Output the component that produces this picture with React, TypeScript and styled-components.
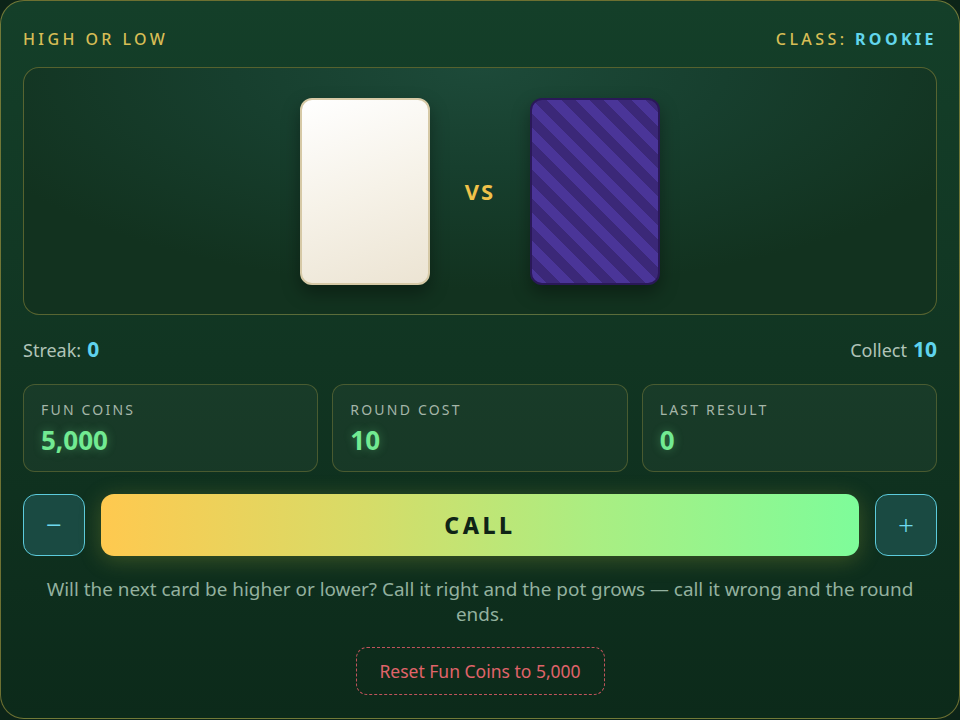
import styled, { createGlobalStyle } from "styled-components";

const GlobalStyle = createGlobalStyle`
  html, body {
    margin: 0;
    padding: 0;
    background: #0c2418;
  }
  body {
    font-family: "Noto Sans", "Open Sans", sans-serif;
  }
`;

const Panel = styled.div`
  box-sizing: border-box;
  width: 960px;
  height: 719px;
  padding: 28px 22px 0;
  border: 1px solid rgba(190, 170, 70, 0.55);
  border-radius: 24px;
  background: linear-gradient(180deg, #143f29 0%, #113522 50%, #0c2a1a 100%);
  display: flex;
  flex-direction: column;
  color: #d8e6dc;
`;

const Header = styled.div`
  display: flex;
  justify-content: space-between;
  align-items: center;
  height: 20px;
  font-size: 16px;
  font-weight: 500;
  letter-spacing: 3.4px;
  text-transform: uppercase;
  color: #d7bd55;
`;

const ClassName = styled.span`
  color: #62d6ec;
  font-weight: 700;
`;

const Table = styled.div`
  margin-top: 18px;
  height: 248px;
  box-sizing: border-box;
  border: 1px solid rgba(190, 170, 70, 0.4);
  border-radius: 16px;
  background: radial-gradient(ellipse 60% 90% at 50% 0%, #1d4a39 0%, #173f2e 45%, #12321f 100%);
  display: flex;
  align-items: center;
  justify-content: center;
  gap: 35px;
`;

const Card = styled.div<{ $back?: boolean }>`
  width: 130px;
  height: 187px;
  box-sizing: border-box;
  border-radius: 12px;
  box-shadow: 0 8px 18px rgba(0, 0, 0, 0.35);
  border: 2px solid ${(p) => (p.$back ? "#2a1858" : "#d6c9a6")};
  background: ${(p) =>
    p.$back
      ? "repeating-linear-gradient(45deg, #4a3598 0px, #4a3598 10px, #3b2878 10px, #3b2878 20px)"
      : "linear-gradient(160deg, #ffffff 0%, #f6f2e8 50%, #ece4d3 100%)"};
`;

const Versus = styled.span`
  font-size: 22px;
  font-weight: 700;
  letter-spacing: 2px;
  color: #f0c24a;
`;

const InfoRow = styled.div`
  margin-top: 20px;
  display: flex;
  justify-content: space-between;
  align-items: baseline;
  font-size: 18px;
  color: #b0c4b8;
`;

const Accent = styled.span`
  font-size: 21px;
  font-weight: 700;
  color: #5fd3ee;
  margin-left: 6px;
`;

const Stats = styled.div`
  margin-top: 21px;
  display: grid;
  grid-template-columns: repeat(3, 1fr);
  gap: 14px;
`;

const StatBox = styled.div`
  height: 88px;
  box-sizing: border-box;
  padding: 15px 17px;
  border: 1px solid rgba(190, 170, 70, 0.3);
  border-radius: 12px;
  background: rgba(255, 255, 255, 0.035);
  display: flex;
  flex-direction: column;
  gap: 3px;
`;

const StatLabel = styled.span`
  font-size: 14px;
  letter-spacing: 2.2px;
  text-transform: uppercase;
  color: #a5b6a8;
`;

const StatValue = styled.span`
  font-size: 26px;
  font-weight: 700;
  color: #72ea92;
  text-shadow: 0 0 10px rgba(114, 234, 146, 0.35);
`;

const Controls = styled.div`
  margin-top: 22px;
  display: flex;
  gap: 16px;
  height: 62px;
`;

const StepButton = styled.button`
  width: 62px;
  height: 62px;
  box-sizing: border-box;
  border: 1.5px solid #5ccbdc;
  border-radius: 13px;
  background: #1a4a42;
  color: #6fd9ee;
  font-family: inherit;
  font-size: 28px;
  font-weight: 300;
  line-height: 1;
  display: flex;
  align-items: center;
  justify-content: center;
  padding: 0 0 3px;
`;

const CallButton = styled.button`
  flex: 1;
  border: none;
  border-radius: 13px;
  background: linear-gradient(90deg, #ffc94f 0%, #d6dc68 35%, #aaee82 65%, #7efc9a 100%);
  box-shadow: 0 4px 22px rgba(200, 200, 60, 0.25);
  font-family: inherit;
  font-size: 23px;
  font-weight: 800;
  letter-spacing: 3.5px;
  color: #0f2416;
`;

const Hint = styled.p`
  margin: 21px 0 0;
  text-align: center;
  font-size: 18.9px;
  line-height: 25px;
  color: #93b19f;
`;

const ResetButton = styled.button`
  align-self: center;
  margin-top: 20px;
  width: 249px;
  height: 48px;
  border: 1.5px dashed #c2545c;
  border-radius: 11px;
  background: transparent;
  color: #e0646a;
  font-family: inherit;
  font-size: 17.5px;
`;

export default function App() {
  return (
    <>
      <GlobalStyle />
      <Panel>
        <Header>
          <span>High or Low</span>
          <span>
            Class: <ClassName>Rookie</ClassName>
          </span>
        </Header>

        <Table>
          <Card />
          <Versus>VS</Versus>
          <Card $back />
        </Table>

        <InfoRow>
          <span>
            Streak:<Accent>0</Accent>
          </span>
          <span>
            Collect<Accent>10</Accent>
          </span>
        </InfoRow>

        <Stats>
          <StatBox>
            <StatLabel>Fun Coins</StatLabel>
            <StatValue>5,000</StatValue>
          </StatBox>
          <StatBox>
            <StatLabel>Round Cost</StatLabel>
            <StatValue>10</StatValue>
          </StatBox>
          <StatBox>
            <StatLabel>Last Result</StatLabel>
            <StatValue>0</StatValue>
          </StatBox>
        </Stats>

        <Controls>
          <StepButton>−</StepButton>
          <CallButton>CALL</CallButton>
          <StepButton>+</StepButton>
        </Controls>

        <Hint>
          Will the next card be higher or lower? Call it right and the pot grows — call it wrong and the round
          ends.
        </Hint>

        <ResetButton>Reset Fun Coins to 5,000</ResetButton>
      </Panel>
    </>
  );
}
